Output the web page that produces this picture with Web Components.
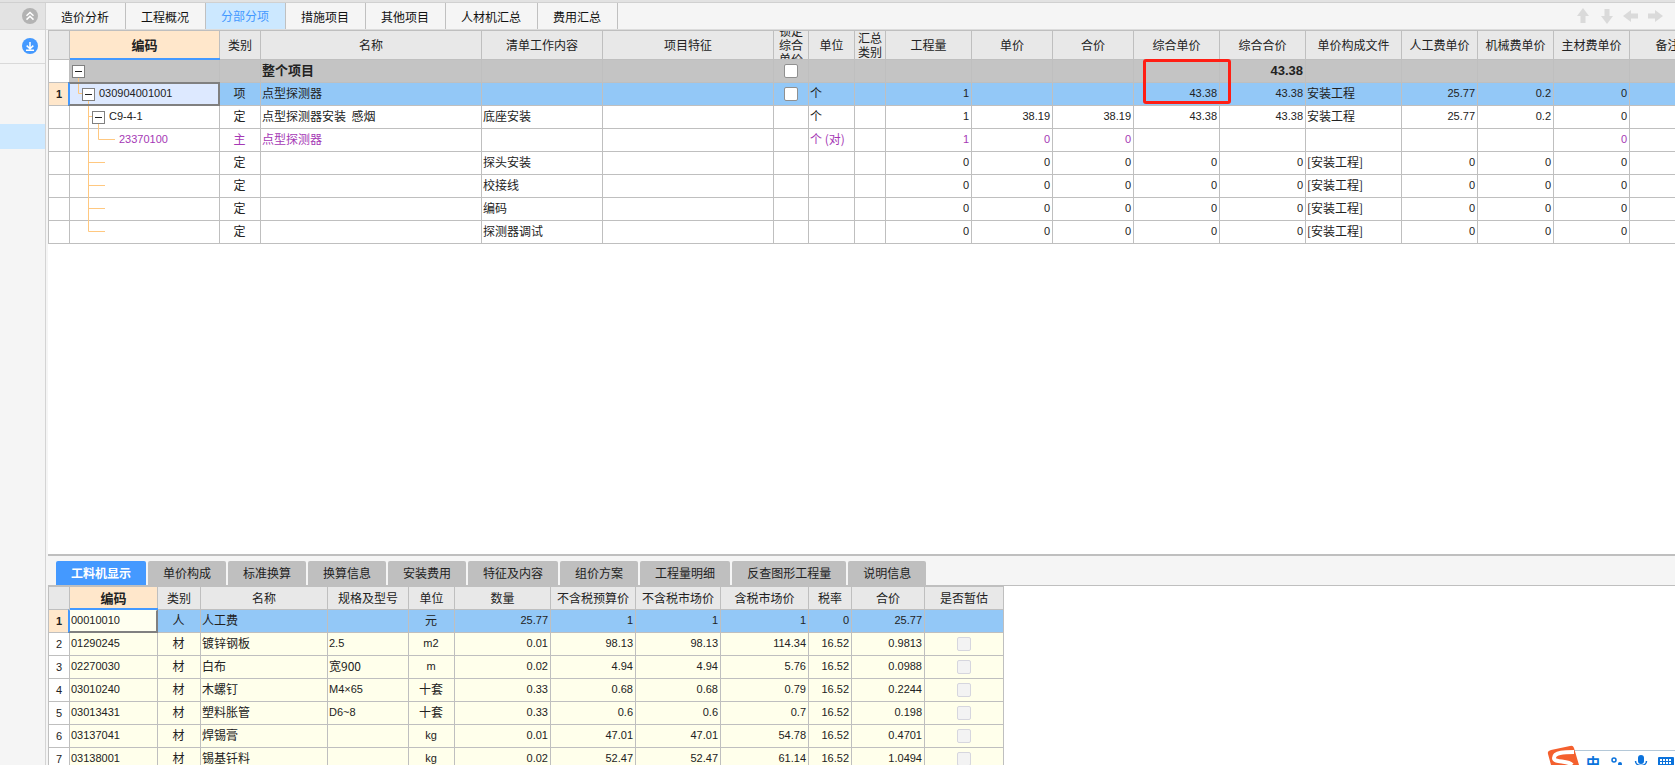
<!DOCTYPE html>
<html lang="zh-CN">
<head>
<meta charset="utf-8">
<title>分部分项</title>
<style>
  html, body { margin: 0; height: 100%; }
  body { font: 12px/18px "Noto Sans CJK SC", sans-serif; color: #222; background: #fff; overflow: hidden; }
</style>
</head>
<body>
<cost-app></cost-app>

<script>
/* Grid data. Columns: t title, w width, a alignment, key = frozen code column.
   Rows: n row number, c row style, v cell values, tree = guide lines of the code cell. */
const trunk = 'M18.5 0V23M18.5 10.5H35';
const work = (name, d = trunk) => ({
  tree: { w: 35, d },
  v: ['', '定', '', name, '', '', '', '', '0', '0', '0', '0', '0', '[安装工程]', '0', '0', '0', '']
});
const GRIDS = {
  items: {
    columns: [
      { t: '编码', w: 150, key: true }, { t: '类别', w: 41, a: 'mid' }, { t: '名称', w: 221 },
      { t: '清单工作内容', w: 121 }, { t: '项目特征', w: 171 }, { t: '锁定综合单价', w: 35, a: 'mid', wrap: true },
      { t: '单位', w: 46 }, { t: '汇总类别', w: 31, wrap: true }, { t: '工程量', w: 86, a: 'num' },
      { t: '单价', w: 81, a: 'num' }, { t: '合价', w: 81, a: 'num' }, { t: '综合单价', w: 86, a: 'num' },
      { t: '综合合价', w: 86, a: 'num' }, { t: '单价构成文件', w: 96 }, { t: '人工费单价', w: 76, a: 'num' },
      { t: '机械费单价', w: 76, a: 'num' }, { t: '主材费单价', w: 76, a: 'num' }, { t: '备注', w: 76 }
    ],
    rows: [
      { c: 'sum', mark: 11, tree: { w: 2, d: 'M8.5 17V23', box: true },
        v: ['', '', '整个项目', '', '', '[ ]', '', '', '', '', '', '', '43.38'] },
      { n: '1', c: 'on', tree: { w: 12, d: 'M8.5 0V10.5H12M18.5 17V23', box: true },
        v: ['030904001001', '项', '点型探测器', '', '', '[ ]', '个', '', '1', '', '', '43.38', '43.38', '安装工程', '25.77', '0.2', '0'] },
      { tree: { w: 22, d: 'M18.5 0V23M18.5 10.5H22M28.5 17V23', box: true },
        v: ['C9-4-1', '定', '点型探测器安装&nbsp; 感烟', '底座安装', '', '', '个', '', '1', '38.19', '38.19', '43.38', '43.38', '安装工程', '25.77', '0.2', '0'] },
      { c: 'sub', tree: { w: 45, d: 'M18.5 0V23M28.5 0V10.5H45' },
        v: ['23370100', '主', '点型探测器', '', '', '', '个 (对)', '', '1', '0', '0', '', '', '', '', '', '0'] },
      work('探头安装'), work('校接线'), work('编码'), work('探测器调试', 'M18.5 0V10.5H35')
    ]
  },
  resources: {
    columns: [
      { t: '编码', w: 88, key: true }, { t: '类别', w: 43, a: 'mid' }, { t: '名称', w: 127 },
      { t: '规格及型号', w: 81 }, { t: '单位', w: 46, a: 'mid' }, { t: '数量', w: 96, a: 'num' },
      { t: '不含税预算价', w: 85, a: 'num' }, { t: '不含税市场价', w: 85, a: 'num' },
      { t: '含税市场价', w: 88, a: 'num' }, { t: '税率', w: 43, a: 'num' }, { t: '合价', w: 73, a: 'num' },
      { t: '是否暂估', w: 79, a: 'mid' }
    ],
    rows: [
      { n: '1', c: 'on', v: ['00010010', '人', '人工费', '', '元', '25.77', '1', '1', '1', '0', '25.77', ''] },
      { n: '2', v: ['01290245', '材', '镀锌钢板', '2.5', 'm2', '0.01', '98.13', '98.13', '114.34', '16.52', '0.9813', '[-]'] },
      { n: '3', v: ['02270030', '材', '白布', '宽900', 'm', '0.02', '4.94', '4.94', '5.76', '16.52', '0.0988', '[-]'] },
      { n: '4', v: ['03010240', '材', '木螺钉', 'M4×65', '十套', '0.33', '0.68', '0.68', '0.79', '16.52', '0.2244', '[-]'] },
      { n: '5', v: ['03013431', '材', '塑料胀管', 'D6~8', '十套', '0.33', '0.6', '0.6', '0.7', '16.52', '0.198', '[-]'] },
      { n: '6', v: ['03137041', '材', '焊锡膏', '', 'kg', '0.01', '47.01', '47.01', '54.78', '16.52', '0.4701', '[-]'] },
      { n: '7', v: ['03138001', '材', '锡基钎料', '', 'kg', '0.02', '52.47', '52.47', '61.14', '16.52', '1.0494', '[-]'] }
    ]
  }
};

const define = (name, html, setup) => {
  const tpl = document.createElement('template');
  tpl.innerHTML = html;
  customElements.define(name, class extends HTMLElement {
    connectedCallback() {
      if (this.shadowRoot) return;
      const root = this.attachShadow({ mode: 'open' });
      root.append(tpl.content.cloneNode(true));
      if (setup) setup(this, root);
    }
  });
};

/* ---------- Left rail ---------- */
define('side-rail', `
<style>
  :host { display: flex; flex-direction: column; background: #f5f5f5; border-right: 1px solid #d4d4d4; }
  button { box-sizing: border-box; display: flex; align-items: center; justify-content: flex-end; padding: 0 7px 0 0; border: 0; background: none; width: 100%; }
  .fold { height: 27px; background: #e3e3e3; border-bottom: 1px solid #d9d9d9; }
  .load { height: 34px; padding-bottom: 2px; border-bottom: 1px solid #d9d9d9; }
  .current { height: 25px; margin-top: 60px; background: #cce8ff; }
  svg { display: block; }
</style>
<button class="fold" aria-label="收起">
  <svg width="16" height="16" viewBox="0 0 16 16"><circle cx="8" cy="8" r="8" fill="#b3b3b3"/><path d="M4.5 7.8L8 4.5l3.5 3.3M4.5 11.6L8 8.3l3.5 3.3" fill="none" stroke="#fff" stroke-width="1.5"/></svg>
</button>
<button class="load" aria-label="下载">
  <svg width="16" height="16" viewBox="0 0 16 16"><circle cx="8" cy="8" r="8" fill="#4499ff"/><path d="M8 4v7M4.7 7.6L8 10.8l3.3-3.2M4 12.3h8" fill="none" stroke="#fff" stroke-width="1.5"/></svg>
</button>
<div class="current"></div>`);

/* ---------- Page tabs with move arrows ---------- */
define('page-tabs', `
<style>
  :host { display: flex; align-items: stretch; height: 26px; background: #f5f5f5; border-bottom: 1px solid #dcdcdc; }
  nav { display: flex; }
  ::slotted(button) { font: inherit; color: #111; background: none; border: 0; border-right: 1px solid #c0c0c0; margin: 0; padding: 2px 16px 0 15px; }
  ::slotted(button[aria-selected="true"]) { background: #cce8ff; color: #4499ff; padding-top: 0; }
  .move { display: flex; align-items: center; gap: 8px; margin-left: auto; padding: 0 12px 0 0; }
  .move button { border: 0; background: none; padding: 0; width: 16px; height: 16px; }
  svg { display: block; fill: #dadada; }
</style>
<nav role="tablist"><slot></slot></nav>
<div class="move">
  <button aria-label="上移"><svg width="16" height="16"><path d="M8 0l6 8h-3.5v7h-5V8H2z"/></svg></button>
  <button aria-label="下移"><svg width="16" height="16"><path d="M8 16l6-8h-3.5V1h-5v7H2z"/></svg></button>
  <button aria-label="左移"><svg width="16" height="16"><path d="M0 8l8-6v3.5h7v5H8V14z"/></svg></button>
  <button aria-label="右移"><svg width="16" height="16"><path d="M16 8L8 2v3.5H1v5h7V14z"/></svg></button>
</div>`);

/* ---------- Detail tabs ---------- */
define('detail-tabs', `
<style>
  :host { display: flex; gap: 2px; padding: 5px 8px 0; height: 24px; background: #f5f5f5; border-bottom: 1px solid #bfbfbf; }
  ::slotted(button) { font: inherit; color: #222; background: #bfbfbf; border: 0; border-radius: 2px 2px 0 0; margin: 0; padding: 0 15px; }
  ::slotted(button[aria-selected="true"]) { background: #4499ff; color: #fff; font-weight: 700; }
</style>
<slot></slot>`);

/* ---------- Spreadsheet grid ---------- */
define('data-grid', `
<style>
  :host { display: block; overflow: hidden; background: #fff; }
  table { table-layout: fixed; width: 0; border-collapse: separate; border-spacing: 0; border: solid #bfbfbf; border-width: 1px 0 0 1px; }
  th, td { position: relative; box-sizing: border-box; height: 23px; padding: 0 2px 2px 1px; border: solid #bfbfbf; border-width: 0 1px 1px 0; white-space: nowrap; overflow: hidden; vertical-align: middle; text-align: left; }
  th { padding: 0 3px; background: #e8e8e8; font-weight: 400; text-align: center; }
  :host([tall]) thead th { height: 29px; }
  .wrap { display: flex; align-items: center; justify-content: center; height: 28px; line-height: 14px; overflow: hidden; white-space: normal; }
  .key { background: #ffe7cb; font-weight: 700; font-size: 13px; overflow: visible; z-index: 2; }
  .key::after { content: ""; position: absolute; left: 0; right: -1px; bottom: -1px; height: 2px; background: #4499ff; }
  .num { text-align: right; }
  .mid { text-align: center; }
  .latin { font-family: "Liberation Sans", "Noto Sans CJK SC", sans-serif; font-size: 11px; }
  tbody td { background: var(--cell, #fff); }
  tbody th { background: #fff; }
  .sum td { background: #c4c4c4; font-weight: 700; font-size: 13px; }
  .on td { background: #93c8f7; }
  .on th { background: #ffe7cb; font-weight: 700; }
  .sub td { color: #a538b5; }
  td.code { overflow: visible; }
  .on td.code { background: var(--active, #dde9ff); z-index: 1; }
  .on td.code::after { content: ""; position: absolute; inset: -1px -1px -1px -2px; border: 2px solid #808080; border-left-color: #4499ff; border-top-color: var(--active-top, #808080); }
  td.tree, td.check { padding: 0; }
  .node { display: flex; align-items: center; height: 22px; }
  .node svg { flex: none; overflow: visible; }
  .node button { flex: none; position: relative; z-index: 1; width: 13px; height: 13px; padding: 0; border: 1px solid #808080; background: #fff; }
  .node button::before { content: ""; display: block; width: 7px; height: 1px; margin: 0 auto; background: #222; }
  .node span { padding: 0 0 2px 4px; }
  input { appearance: none; box-sizing: border-box; display: block; width: 14px; height: 14px; margin: 0 auto; border: 1px solid #909090; border-radius: 2px; background: #fff; }
  input:disabled { border-color: #d6d6de; background: #f3f3f3; }
  td.marked { overflow: visible; }
  .mark { position: absolute; z-index: 3; left: 9px; top: -1px; width: 82px; height: 39px; border: 3px solid #ff1e14; border-radius: 3px; }
</style>
<table><colgroup></colgroup><thead></thead><tbody></tbody></table>`, (host, root) => {
  const { columns, rows } = GRIDS[host.getAttribute('source')];
  const plain = s => /^[\x20-\x7e×]*$/.test(s);
  root.querySelector('colgroup').innerHTML =
    '<col style="width:21px">' + columns.map(c => `<col style="width:${c.w}px">`).join('');
  root.querySelector('thead').innerHTML = '<tr><th></th>' + columns.map(c =>
    `<th scope="col" class="${c.key ? 'key' : ''}">${c.wrap ? `<div class="wrap">${c.t}</div>` : c.t}</th>`).join('') + '</tr>';
  root.querySelector('tbody').innerHTML = rows.map(r => {
    const cells = columns.map((c, i) => {
      const v = r.v[i] ?? '';
      const cls = [c.a || '', c.key ? 'code' : ''];
      let body = v;
      if (v === '[ ]' || v === '[-]') {
        cls.push('check');
        body = `<input type="checkbox" aria-label="${c.t}"${v === '[-]' ? ' disabled' : ''}>`;
      } else if (c.key && r.tree) {
        const { w, d, box } = r.tree;
        cls.push('tree', 'latin');
        body = `<div class="node"><svg width="${w}" height="22"><path d="${d}" fill="none" stroke="#ffc880"/></svg>` +
          (box ? '<button aria-label="折叠"></button>' : '') + (v ? `<span>${v}</span>` : '') + '</div>';
      } else if (v && plain(v) && r.c !== 'sum') cls.push('latin');
      else if (v && plain(v)) body = `<span style="font-family:'Liberation Sans',sans-serif">${v}</span>`;
      if (r.mark === i) { cls.push('marked'); body += '<div class="mark"></div>'; }
      return `<td class="${cls.join(' ').trim()}">${body}</td>`;
    }).join('');
    return `<tr class="${r.c || ''}"><th scope="row" class="latin">${r.n || ''}</th>${cells}</tr>`;
  }).join('');
});

/* ---------- Input-method bar ---------- */
define('ime-bar', `
<style>
  :host { position: fixed; right: 0; bottom: 0; z-index: 5; display: flex; align-items: flex-end; height: 20px; overflow: hidden; color: #0a72dc; }
  .logo { position: relative; z-index: 1; margin-right: -8px; }
  .bar { display: flex; align-items: flex-start; gap: 10px; height: 14px; padding: 0 1px 0 14px; border-top: 1px solid #b4c8d8; background: #fff; }
  b { font-size: 14px; line-height: 22px; }
  svg { display: block; flex: none; }
</style>
<svg class="logo" width="33" height="20" viewBox="0 0 33 20"><path d="M1 9Q0 6 4 5L23 1q3-1 4 2l5 17H4z" fill="#f4602e"/><path d="M27 7C19 7 7 7 7 13c0 5 14 2 18 7" fill="none" stroke="#fff" stroke-width="4"/></svg>
<div class="bar">
  <b>中</b>
  <svg width="14" height="14"><circle cx="4" cy="9" r="2" fill="none" stroke="currentColor" stroke-width="1.5"/><circle cx="10" cy="13" r="2" fill="currentColor"/></svg>
  <svg width="14" height="14"><rect x="4" y="4" width="6" height="9" rx="3" fill="currentColor"/><path d="M1.5 10c0 6 11 6 11 0" fill="none" stroke="currentColor" stroke-width="1.5"/></svg>
  <svg width="16" height="14"><rect y="6" width="16" height="11" rx="1" fill="currentColor"/><path d="M2 9h12M2 12h12" stroke="#fff" stroke-width="2" stroke-dasharray="2 1"/></svg>
</div>`);

/* ---------- Application shell ---------- */
define('cost-app', `
<style>
  :host { display: grid; grid-template: 3px minmax(0, 1fr) / 46px minmax(0, 1fr); height: 100vh; background: #f5f5f5; }
  .top { grid-column: 1 / -1; box-sizing: border-box; background: #e2e2e2; border-bottom: 1px solid #d0d0d0; }
  main { display: flex; flex-direction: column; min-width: 0; }
  .upper { flex: 1; margin-left: 2px; }
  .lower { flex: 0 0 211px; display: flex; flex-direction: column; margin-left: 2px; box-sizing: border-box; border-top: 2px solid #bfbfbf; overflow: hidden; --cell: #ffffeb; --active: #fffff0; --active-top: transparent; }
  .lower data-grid { flex: 1; }
</style>
<div class="top"></div>
<side-rail></side-rail>
<main>
  <page-tabs>
    <button role="tab">造价分析</button><button role="tab">工程概况</button><button role="tab" aria-selected="true">分部分项</button><button role="tab">措施项目</button><button role="tab">其他项目</button><button role="tab">人材机汇总</button><button role="tab">费用汇总</button>
  </page-tabs>
  <data-grid class="upper" source="items" tall></data-grid>
  <section class="lower">
    <detail-tabs role="tablist">
      <button role="tab" aria-selected="true">工料机显示</button><button role="tab">单价构成</button><button role="tab">标准换算</button><button role="tab">换算信息</button><button role="tab">安装费用</button><button role="tab">特征及内容</button><button role="tab">组价方案</button><button role="tab">工程量明细</button><button role="tab">反查图形工程量</button><button role="tab">说明信息</button>
    </detail-tabs>
    <data-grid source="resources"></data-grid>
  </section>
</main>
<ime-bar></ime-bar>`);
</script>
</body>
</html>
